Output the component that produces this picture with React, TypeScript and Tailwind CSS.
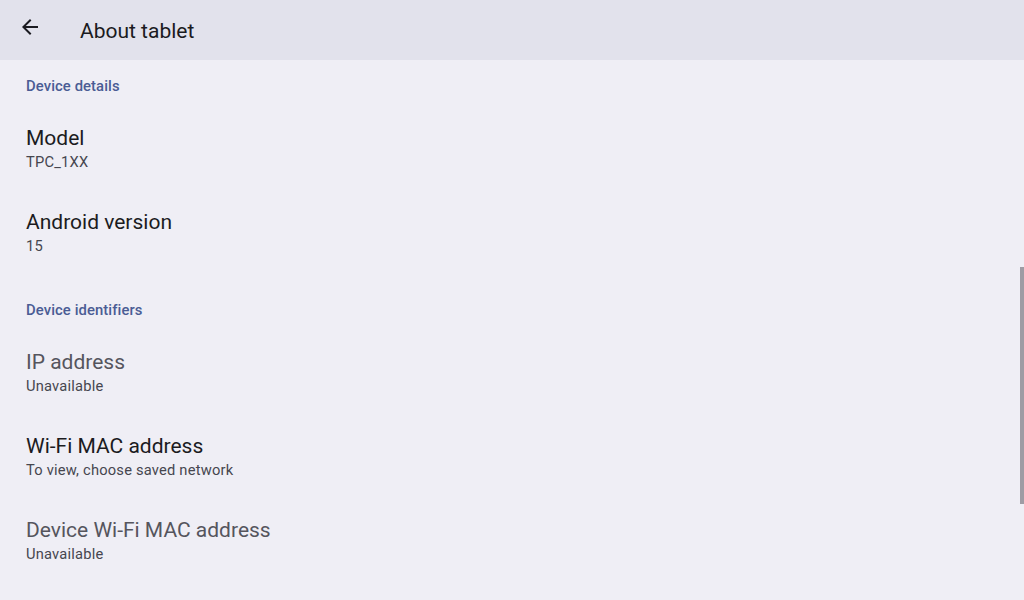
import React from 'react';

type Item = { title: string; summary: string; disabled?: boolean };

const sections: { heading: string; items: Item[] }[] = [
  {
    heading: 'Device details',
    items: [
      { title: 'Model', summary: 'TPC_1XX' },
      { title: 'Android version', summary: '15' },
    ],
  },
  {
    heading: 'Device identifiers',
    items: [
      { title: 'IP address', summary: 'Unavailable', disabled: true },
      { title: 'Wi-Fi MAC address', summary: 'To view, choose saved network' },
      { title: 'Device Wi-Fi MAC address', summary: 'Unavailable', disabled: true },
    ],
  },
];

const Row: React.FC<{ item: Item }> = ({ item }) => (
  <div className="h-[84px] flex flex-col justify-center px-[26px]">
    <div
      className={`text-[21px] leading-[26px] ${item.disabled ? 'text-[#55555d]' : 'text-[#1b1b21]'}`}
    >
      {item.title}
    </div>
    <div className="text-[14.7px] leading-[22px] tracking-[0.2px] text-[#46464f]">{item.summary}</div>
  </div>
);

export default function App() {
  return (
    <div
      className="relative w-[1024px] h-[600px] overflow-hidden bg-[#efeef5]"
      style={{ fontFamily: 'Roboto, "Noto Sans", sans-serif' }}
    >
      <div className="h-[60px] bg-[#e2e2ec] flex items-center">
        <div className="w-[80px] flex pl-[18px] -mt-[7px]">
          <svg width="24" height="24" viewBox="0 0 24 24" fill="#1b1b21">
            <path d="M20 11H7.83l5.59-5.59L12 4l-8 8 8 8 1.41-1.41L7.83 13H20v-2z" />
          </svg>
        </div>
        <div className="text-[21px] text-[#1b1b21] mt-[3px]">About tablet</div>
      </div>

      {sections.map((s, i) => (
        <div key={s.heading}>
          <div
            className={`px-[26px] text-[14.8px] leading-[20px] font-medium tracking-[0.1px] text-[#4a5c94] ${
              i === 0 ? 'pt-[16px] pb-[11px]' : 'pt-[25px] pb-[11px]'
            }`}
          >
            {s.heading}
          </div>
          {s.items.map((it) => (
            <Row key={it.title} item={it} />
          ))}
        </div>
      ))}

      <div className="absolute right-0 top-[267px] w-[4px] h-[237px] bg-[#9e9ca4]" />
    </div>
  );
}
